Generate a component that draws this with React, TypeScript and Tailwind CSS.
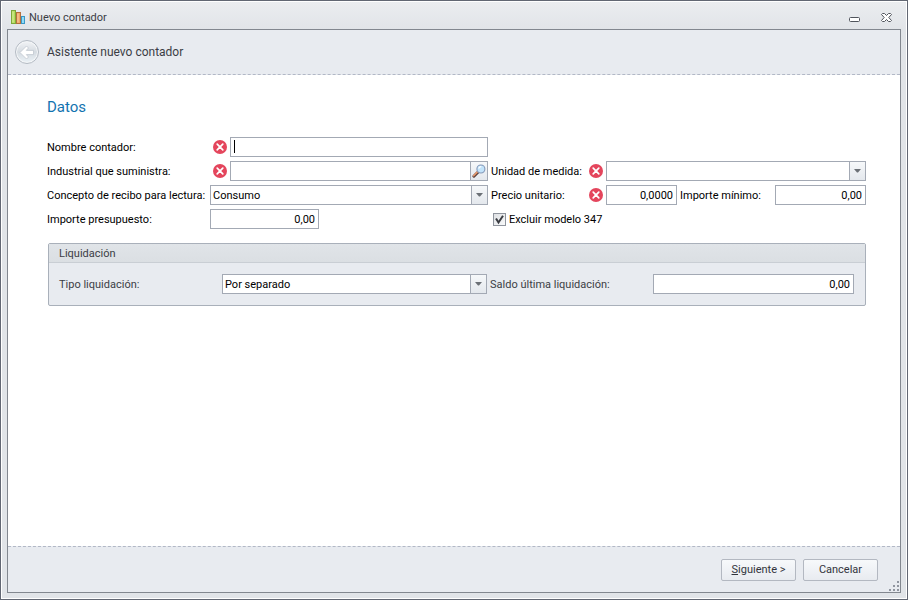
import React from "react";

const inputClass =
  "block h-5 w-full min-w-0 border border-[#a3a9b4] bg-white px-[3px] text-[11px] text-black outline-none";

const ErrorIcon = () => (
  <span className="flex w-5 shrink-0 items-center pl-[3px]">
    <svg width="14" height="14" viewBox="0 0 14 14" aria-hidden="true">
      <circle cx="7" cy="7" r="7" fill="#e4455c" />
      <path
        d="M4.2 4.2l5.6 5.6M9.8 4.2l-5.6 5.6"
        stroke="#fff"
        strokeWidth="1.7"
        strokeLinecap="round"
      />
    </svg>
  </span>
);

const AppIcon = () => (
  <svg width="16" height="16" viewBox="0 0 16 16" aria-hidden="true">
    <rect x="0.5" y="0.5" width="4" height="13" fill="#b4dc5c" stroke="#7fa93a" />
    <path d="M2 1.5v11" stroke="#d6efa0" />
    <rect x="5.5" y="2.5" width="4" height="11" fill="#f0a565" stroke="#b5703c" />
    <path d="M7 3.5v9" stroke="#fad0a6" />
    <rect x="10.5" y="6.5" width="3" height="7" fill="#8ddcf8" stroke="#3b97c6" />
  </svg>
);

const BackIcon = () => (
  <svg width="26" height="26" viewBox="0 0 26 26" aria-hidden="true">
    <defs>
      <linearGradient id="backFill" x1="0" y1="0" x2="0" y2="1">
        <stop offset="0" stopColor="#f0f2f5" />
        <stop offset="0.5" stopColor="#d5dbe1" />
        <stop offset="1" stopColor="#e9f0f5" />
      </linearGradient>
    </defs>
    <circle cx="13" cy="13" r="11.5" fill="#f4f6f8" stroke="#b3bac3" />
    <circle cx="13" cy="13" r="10" fill="url(#backFill)" />
    <path
      d="M6 13.5l6.5-6.5 2 2-2.2 2.4h7.2v4.200h-7.200l2.200 2.400-2 2z"
      fill="#fff"
      stroke="#c0c7cf"
      strokeWidth="0.8"
      strokeLinejoin="round"
    />
  </svg>
);

const SearchIcon = () => (
  <svg width="14" height="14" viewBox="0 0 14 14" aria-hidden="true">
    <path d="M1.9 12.2l4-4" stroke="#5c4440" strokeWidth="3" strokeLinecap="round" />
    <path d="M1.6 11.7l3.8-3.8" stroke="#e8986c" strokeWidth="1.5" strokeLinecap="round" />
    <circle cx="8.9" cy="5" r="4" fill="#c3e4fb" stroke="#8498b8" strokeWidth="1.1" />
    <path d="M6.7 4.7a2.4 2.4 0 0 1 2.6-2" stroke="#fff" strokeWidth="1.2" fill="none" />
  </svg>
);

type RowProps = {
  id: string;
  label: string;
  labelClass?: string;
  invalid?: boolean;
  children: React.ReactNode;
};

const Row = ({ id, label, labelClass = "w-[163px]", invalid, children }: RowProps) => (
  <div className="flex min-w-0 flex-1 items-center">
    <label htmlFor={id} className={`shrink-0 pt-[2px] whitespace-nowrap ${labelClass}`}>
      {label}
    </label>
    {invalid && <ErrorIcon />}
    <div className="relative min-w-0 flex-1">{children}</div>
  </div>
);

const Dropdown = ({ id, options }: { id: string; options: string[] }) => (
  <>
    <select id={id} className={`${inputClass} appearance-none pt-[2px] pl-[2px] pr-5`}>
      {options.map((option) => (
        <option key={option}>{option}</option>
      ))}
    </select>
    <span className="pointer-events-none absolute inset-y-px right-px flex w-4 items-center justify-center border-l border-[#a3a9b4] bg-linear-to-b from-[#f6f8fa] to-[#e4e8ed]">
      <svg width="7" height="4" viewBox="0 0 7 4" aria-hidden="true">
        <path d="M0 0h7L4 3.5H3z" fill="#6b7076" />
      </svg>
    </span>
  </>
);

const wizardButton =
  "h-[22px] w-[75px] rounded-[2px] border border-[#b3b8c1] bg-linear-to-b from-[#f7f9fb] to-[#e8ebf0] pt-px text-[#32343c]";

export default function App() {
  return (
    <div className="flex min-h-screen flex-col border border-[#626773] bg-[#e2e5e8] font-['Roboto',sans-serif] text-[11px] leading-4 text-black">
      <div className="flex flex-1 flex-col border border-white bg-linear-to-b from-[#ebedf0] to-[#e1e4e8] to-[28px] px-[5px] pb-[5px]">
        {/* Title bar */}
        <header className="flex h-[27px] items-center pt-1 pl-1 pr-2">
          <AppIcon />
          <h1 className="ml-[2px] flex-1 text-[#3b3d45]">Nuevo contador</h1>
          <button type="button" aria-label="Minimizar" className="mr-5 flex pt-1">
            <svg width="12" height="6" viewBox="0 0 12 6">
              <rect x="0.5" y="0.5" width="10" height="4" rx="1" fill="#fff" stroke="#50545c" />
            </svg>
          </button>
          <button type="button" aria-label="Cerrar">
            <svg width="12" height="10" viewBox="0 0 12 10">
              <path
                d="M1.5 .5h2L5.5 2.5 7.5 .5h2l1 1L7.8 4.5l2.7 3-1 1h-2L5.5 6.5 3.5 8.5h-2l-1-1 2.7-3L.5 1.5z"
                fill="#fff"
                stroke="#50545c"
              />
            </svg>
          </button>
        </header>

        <div className="flex flex-1 flex-col border border-[#82878f] bg-white">
          {/* Wizard header */}
          <div className="flex h-[45px] items-center border-b border-dashed border-[#b2b8c6] bg-[#e8ebf0] pl-[6px]">
            <button type="button" aria-label="Atrás" disabled>
              <BackIcon />
            </button>
            <p className="ml-[7px] text-[12px] text-[#3b3d45]">Asistente nuevo contador</p>
          </div>

          {/* Form */}
          <main className="flex-1 pt-5 pr-[34px] pb-5 pl-[39px]">
            <h2 className="text-[15px] leading-6 text-[#1273b0]">Datos</h2>

            <div className="mt-[18px] grid grid-cols-[441fr_375fr] gap-x-[3px] gap-y-1">
              <Row id="nombre" label="Nombre contador:" invalid>
                <input id="nombre" type="text" className={inputClass} />
                <span className="absolute top-[3px] left-1 h-[13px] w-px bg-black" />
              </Row>
              <div />

              <Row id="industrial" label="Industrial que suministra:" invalid>
                <input id="industrial" type="text" className={`${inputClass} pr-5`} />
                <button
                  type="button"
                  aria-label="Buscar industrial"
                  className="absolute inset-y-px right-px flex w-[17px] items-center justify-center border-l border-[#a3a9b4] bg-linear-to-b from-[#f6f8fa] to-[#e4e8ed]"
                >
                  <SearchIcon />
                </button>
              </Row>
              <Row id="unidad" label="Unidad de medida:" labelClass="w-[95px]" invalid>
                <Dropdown id="unidad" options={[""]} />
              </Row>

              <Row id="concepto" label="Concepto de recibo para lectura:">
                <Dropdown id="concepto" options={["Consumo"]} />
              </Row>
              <div className="flex gap-[3px]">
                <Row id="precio" label="Precio unitario:" labelClass="w-[95px]" invalid>
                  <input
                    id="precio"
                    type="text"
                    defaultValue="0,0000"
                    className={`${inputClass} text-right`}
                  />
                </Row>
                <Row id="minimo" label="Importe mínimo:" labelClass="w-[95px]">
                  <input
                    id="minimo"
                    type="text"
                    defaultValue="0,00"
                    className={`${inputClass} text-right`}
                  />
                </Row>
              </div>

              <Row id="presupuesto" label="Importe presupuesto:">
                <input
                  id="presupuesto"
                  type="text"
                  defaultValue="0,00"
                  className={`${inputClass} max-w-[109px] text-right`}
                />
              </Row>
              <label className="flex items-center gap-[3px] pl-[2px]">
                <span className="relative flex">
                  <input
                    type="checkbox"
                    defaultChecked
                    className="peer size-[13px] appearance-none border border-[#8f949d] bg-linear-to-br from-[#dfe1e4] to-[#f8f9fa]"
                  />
                  <svg
                    className="pointer-events-none absolute inset-0 hidden peer-checked:block"
                    width="13"
                    height="13"
                    viewBox="0 0 13 13"
                    aria-hidden="true"
                  >
                    <path d="M3 5.5l2.5 4L10 2.8" fill="none" stroke="#3a3c42" strokeWidth="2" />
                  </svg>
                </span>
                <span className="pt-[2px]">Excluir modelo 347</span>
              </label>
            </div>

            <section className="mt-[14px] ml-px rounded-[2px] border border-[#a9b0ba] bg-[#e8ebf0] text-[#3b3d45]">
              <h3 className="h-[19px] border-b border-[#c9ced4] bg-linear-to-b from-[#e0e4e8] to-[#dbdfe3] pl-[10px] leading-[19px]">
                Liquidación
              </h3>
              <div className="grid grid-cols-[428fr_364fr] gap-x-[3px] pt-[11px] pr-[11px] pb-[11px] pl-[10px]">
                <Row id="tipo" label="Tipo liquidación:">
                  <Dropdown id="tipo" options={["Por separado"]} />
                </Row>
                <Row id="saldo" label="Saldo última liquidación:">
                  <input
                    id="saldo"
                    type="text"
                    defaultValue="0,00"
                    className={`${inputClass} text-right`}
                  />
                </Row>
              </div>
            </section>
          </main>

          {/* Wizard footer */}
          <footer className="relative flex h-[46px] items-center justify-end gap-[7px] border-t border-dashed border-[#b2b8c6] bg-[#e8ebf0] pr-[22px]">
            <button type="button" className={wizardButton}>
              <span className="underline">S</span>iguiente &gt;
            </button>
            <button type="button" className={wizardButton}>
              Cancelar
            </button>
            <svg
              className="absolute right-px bottom-px"
              width="10"
              height="10"
              viewBox="0 0 10 10"
              fill="#90959f"
              aria-hidden="true"
            >
              <path d="M8 0h2v2H8zM4 4h2v2H4zM8 4h2v2H8zM0 8h2v2H0zM4 8h2v2H4zM8 8h2v2H8z" />
            </svg>
          </footer>
        </div>
      </div>
    </div>
  );
}
